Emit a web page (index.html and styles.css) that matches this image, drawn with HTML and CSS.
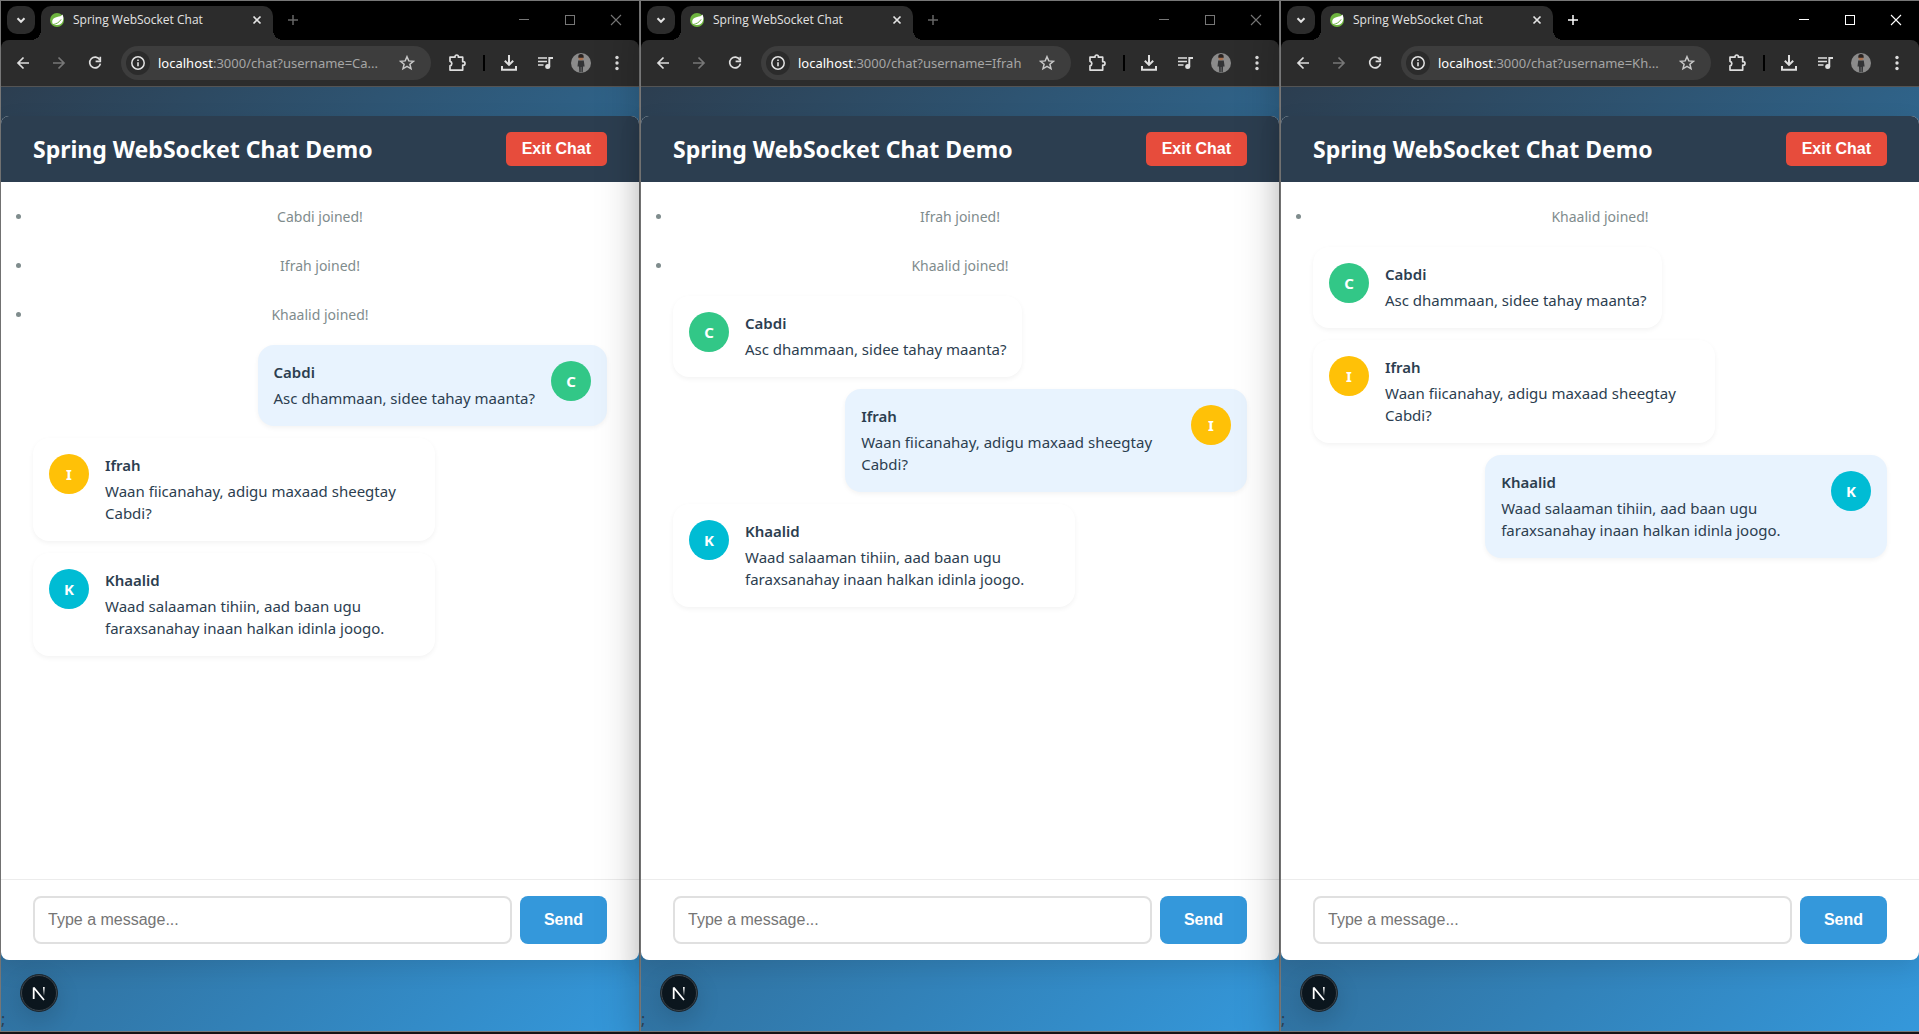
FILE: index.html
```html
<!DOCTYPE html>
<html lang="en">
<head>
<meta charset="utf-8">
<title>Spring WebSocket Chat</title>
<link rel="stylesheet" href="styles.css">
</head>
<body>
<svg class="sprite" aria-hidden="true">
  <symbol id="i-chevron" viewBox="0 0 16 16"><path d="M4.5 6.3 8 9.8l3.500-3.500" fill="none" stroke="currentColor" stroke-width="2"/></symbol>
  <symbol id="i-leaf" viewBox="0 0 16 16"><circle cx="8" cy="8" r="7" fill="#6db33f"/><path d="M13.500 2.500c-1 1.800-3 2-5.500 2.400C4.800 5.500 3 7.500 3.200 10c.1 1 .5 1.900 1.100 2.500 3.200 1.300 9.300 1 10-5.500.2-1.700-.2-3.300-.8-4.500z" fill="#fff"/><path d="M3.700 12.600c3.400-.5 6.500-2 8.400-5.200" fill="none" stroke="#6db33f" stroke-width="1"/></symbol>
  <symbol id="i-x" viewBox="0 0 16 16"><path d="m4.500 4.500 7 7m0-7-7 7" fill="none" stroke="currentColor" stroke-width="1.700"/></symbol>
  <symbol id="i-plus" viewBox="0 0 16 16"><path d="M8 3v10M3 8h10" fill="none" stroke="currentColor" stroke-width="1.500"/></symbol>
  <symbol id="i-min" viewBox="0 0 16 16"><path d="M3 7.500h10" fill="none" stroke="currentColor"/></symbol>
  <symbol id="i-max" viewBox="0 0 16 16"><rect x="3.500" y="3.500" width="9" height="9" fill="none" stroke="currentColor"/></symbol>
  <symbol id="i-close" viewBox="0 0 16 16"><path d="m3 3 10 10m0-10L3 13" fill="none" stroke="currentColor" stroke-width="1.100"/></symbol>
  <symbol id="i-back" viewBox="0 0 16 16"><path d="M14 8H3m5.500-5.500L3 8l5.500 5.500" fill="none" stroke="currentColor" stroke-width="1.700"/></symbol>
  <symbol id="i-forward" viewBox="0 0 16 16"><path d="M2 8h11M7.500 2.500 13 8l-5.500 5.500" fill="none" stroke="currentColor" stroke-width="1.700"/></symbol>
  <symbol id="i-reload" viewBox="0 0 16 16"><path d="M12.800 4.800A5.400 5.400 0 1 0 13.400 8.600" fill="none" stroke="currentColor" stroke-width="1.700"/><path d="M13.300 1.700v4.700H8.600" fill="none" stroke="currentColor" stroke-width="1.700"/></symbol>
  <symbol id="i-info" viewBox="0 0 16 16"><circle cx="8" cy="8" r="6.200" fill="none" stroke="currentColor" stroke-width="1.500"/><path d="M8 7.200v4M8 4.500v1.600" stroke="currentColor" stroke-width="1.600"/></symbol>
  <symbol id="i-star" viewBox="0 0 16 16"><path d="m8 1.700 1.800 4.200 4.600.4-3.500 3 1.100 4.500L8 11.400l-4 2.400 1.100-4.500-3.500-3 4.600-.4z" fill="none" stroke="currentColor" stroke-width="1.500"/></symbol>
  <symbol id="i-puzzle" viewBox="0 0 18 18"><path d="M2 3.200h5v-.5a1.700 1.700 0 0 1 3.400 0v.5h4.300v4.500h.6a1.700 1.700 0 0 1 0 3.400h-.6v5H2v-4.300a2.300 2.300 0 0 0 0-4.500z" fill="none" stroke="currentColor" stroke-width="1.700" stroke-linejoin="round"/></symbol>
  <symbol id="i-download" viewBox="0 0 18 18"><path d="M9 1v9.500M4.800 6.700 9 10.900l4.200-4.200M2 12v3.700h14V12" fill="none" stroke="currentColor" stroke-width="2"/></symbol>
  <symbol id="i-music" viewBox="0 0 18 18"><path d="M2 4h9M2 7.500h9M2 11h5.500" stroke="currentColor" stroke-width="1.700"/><path d="M13.300 12.500V4H17" fill="none" stroke="currentColor" stroke-width="1.900"/><circle cx="11.700" cy="12.600" r="2.500" fill="currentColor"/></symbol>
  <symbol id="i-profile" viewBox="0 0 20 20"><circle cx="10" cy="10" r="10" fill="#8b8b8b"/><path d="M7.200 7.500h5.600l.8 6h-1.500l-.3 5.800H8.300L8 13.500H6.500z" fill="#333436"/><circle cx="10" cy="4.700" r="2.500" fill="#a97250"/><path d="M7.300 3.700a2.700 2.700 0 0 1 5.400 0v1H7.300z" fill="#292423"/><path d="M9.700 14h.8v5h-.8z" fill="#777"/></symbol>
  <symbol id="i-dots" viewBox="0 0 16 16"><circle cx="8" cy="2.500" r="1.700" fill="currentColor"/><circle cx="8" cy="8" r="1.700" fill="currentColor"/><circle cx="8" cy="13.500" r="1.700" fill="currentColor"/></symbol>
  <linearGradient id="n-stem" x1="0" y1="0" x2="0" y2="1"><stop offset="0" stop-color="#fff"/><stop offset="1" stop-color="#fff" stop-opacity="0"/></linearGradient>
  <symbol id="i-next" viewBox="0 0 38 38"><circle cx="19" cy="19" r="18.500" fill="#0b161e" stroke="#1d2830"/><circle cx="19" cy="19" r="17.500" fill="none" stroke="#3d464d"/><path d="M13.700 25V13.500L24 26" fill="none" stroke="#fff" stroke-width="1.800" stroke-linejoin="bevel"/><rect x="23" y="13" width="1.700" height="9" fill="url(#n-stem)"/></symbol>
</svg>
<main class="desktop">

  <section class="window">
    <div class="tabstrip">
      <button class="tab-search" aria-label="Search tabs"><svg><use href="#i-chevron"/></svg></button>
      <div class="tab"><svg><use href="#i-leaf"/></svg><span class="tab-title">Spring WebSocket Chat</span><button class="tab-close" aria-label="Close tab"><svg><use href="#i-x"/></svg></button></div>
      <button class="new-tab" aria-label="New tab"><svg><use href="#i-plus"/></svg></button>
      <div class="controls">
        <button aria-label="Minimize"><svg><use href="#i-min"/></svg></button>
        <button aria-label="Maximize"><svg><use href="#i-max"/></svg></button>
        <button aria-label="Close"><svg><use href="#i-close"/></svg></button>
      </div>
    </div>
    <div class="toolbar">
      <button aria-label="Back"><svg><use href="#i-back"/></svg></button>
      <button class="off" aria-label="Forward"><svg><use href="#i-forward"/></svg></button>
      <button aria-label="Reload"><svg><use href="#i-reload"/></svg></button>
      <div class="address"><span class="site-info"><svg><use href="#i-info"/></svg></span><span class="url"><b>localhost</b>:3000/chat?username=Ca...</span><svg class="star"><use href="#i-star"/></svg></div>
      <button aria-label="Extensions"><svg class="big"><use href="#i-puzzle"/></svg></button>
      <span class="divider"></span>
      <button aria-label="Downloads"><svg class="big"><use href="#i-download"/></svg></button>
      <button aria-label="Media"><svg class="big"><use href="#i-music"/></svg></button>
      <button aria-label="Profile"><svg class="face"><use href="#i-profile"/></svg></button>
      <button aria-label="Menu"><svg><use href="#i-dots"/></svg></button>
    </div>
    <div class="page">
      <div class="chat">
        <header class="chat-header"><h1>Spring WebSocket Chat Demo</h1><button class="exit">Exit Chat</button></header>
        <ul class="messages">
          <li class="event">Cabdi joined!</li>
          <li class="event">Ifrah joined!</li>
          <li class="event">Khaalid joined!</li>
          <li class="message own"><span class="avatar green">C</span><div><strong>Cabdi</strong><p>Asc dhammaan, sidee tahay maanta?</p></div></li>
          <li class="message"><span class="avatar amber">I</span><div><strong>Ifrah</strong><p>Waan fiicanahay, adigu maxaad sheegtay Cabdi?</p></div></li>
          <li class="message"><span class="avatar cyan">K</span><div><strong>Khaalid</strong><p>Waad salaaman tihiin, aad baan ugu faraxsanahay inaan halkan idinla joogo.</p></div></li>
        </ul>
        <form class="composer"><input type="text" aria-label="Message" placeholder="Type a message..."><button type="button">Send</button></form>
      </div>
      <div class="trailing">;</div>
      <button class="dev-badge" aria-label="Developer tools"><svg><use href="#i-next"/></svg></button>
    </div>
  </section>

  <section class="window">
    <div class="tabstrip">
      <button class="tab-search" aria-label="Search tabs"><svg><use href="#i-chevron"/></svg></button>
      <div class="tab"><svg><use href="#i-leaf"/></svg><span class="tab-title">Spring WebSocket Chat</span><button class="tab-close" aria-label="Close tab"><svg><use href="#i-x"/></svg></button></div>
      <button class="new-tab" aria-label="New tab"><svg><use href="#i-plus"/></svg></button>
      <div class="controls">
        <button aria-label="Minimize"><svg><use href="#i-min"/></svg></button>
        <button aria-label="Maximize"><svg><use href="#i-max"/></svg></button>
        <button aria-label="Close"><svg><use href="#i-close"/></svg></button>
      </div>
    </div>
    <div class="toolbar">
      <button aria-label="Back"><svg><use href="#i-back"/></svg></button>
      <button class="off" aria-label="Forward"><svg><use href="#i-forward"/></svg></button>
      <button aria-label="Reload"><svg><use href="#i-reload"/></svg></button>
      <div class="address"><span class="site-info"><svg><use href="#i-info"/></svg></span><span class="url"><b>localhost</b>:3000/chat?username=Ifrah</span><svg class="star"><use href="#i-star"/></svg></div>
      <button aria-label="Extensions"><svg class="big"><use href="#i-puzzle"/></svg></button>
      <span class="divider"></span>
      <button aria-label="Downloads"><svg class="big"><use href="#i-download"/></svg></button>
      <button aria-label="Media"><svg class="big"><use href="#i-music"/></svg></button>
      <button aria-label="Profile"><svg class="face"><use href="#i-profile"/></svg></button>
      <button aria-label="Menu"><svg><use href="#i-dots"/></svg></button>
    </div>
    <div class="page">
      <div class="chat">
        <header class="chat-header"><h1>Spring WebSocket Chat Demo</h1><button class="exit">Exit Chat</button></header>
        <ul class="messages">
          <li class="event">Ifrah joined!</li>
          <li class="event">Khaalid joined!</li>
          <li class="message"><span class="avatar green">C</span><div><strong>Cabdi</strong><p>Asc dhammaan, sidee tahay maanta?</p></div></li>
          <li class="message own"><span class="avatar amber">I</span><div><strong>Ifrah</strong><p>Waan fiicanahay, adigu maxaad sheegtay Cabdi?</p></div></li>
          <li class="message"><span class="avatar cyan">K</span><div><strong>Khaalid</strong><p>Waad salaaman tihiin, aad baan ugu faraxsanahay inaan halkan idinla joogo.</p></div></li>
        </ul>
        <form class="composer"><input type="text" aria-label="Message" placeholder="Type a message..."><button type="button">Send</button></form>
      </div>
      <div class="trailing">;</div>
      <button class="dev-badge" aria-label="Developer tools"><svg><use href="#i-next"/></svg></button>
    </div>
  </section>

  <section class="window active">
    <div class="tabstrip">
      <button class="tab-search" aria-label="Search tabs"><svg><use href="#i-chevron"/></svg></button>
      <div class="tab"><svg><use href="#i-leaf"/></svg><span class="tab-title">Spring WebSocket Chat</span><button class="tab-close" aria-label="Close tab"><svg><use href="#i-x"/></svg></button></div>
      <button class="new-tab" aria-label="New tab"><svg><use href="#i-plus"/></svg></button>
      <div class="controls">
        <button aria-label="Minimize"><svg><use href="#i-min"/></svg></button>
        <button aria-label="Maximize"><svg><use href="#i-max"/></svg></button>
        <button aria-label="Close"><svg><use href="#i-close"/></svg></button>
      </div>
    </div>
    <div class="toolbar">
      <button aria-label="Back"><svg><use href="#i-back"/></svg></button>
      <button class="off" aria-label="Forward"><svg><use href="#i-forward"/></svg></button>
      <button aria-label="Reload"><svg><use href="#i-reload"/></svg></button>
      <div class="address"><span class="site-info"><svg><use href="#i-info"/></svg></span><span class="url"><b>localhost</b>:3000/chat?username=Kh...</span><svg class="star"><use href="#i-star"/></svg></div>
      <button aria-label="Extensions"><svg class="big"><use href="#i-puzzle"/></svg></button>
      <span class="divider"></span>
      <button aria-label="Downloads"><svg class="big"><use href="#i-download"/></svg></button>
      <button aria-label="Media"><svg class="big"><use href="#i-music"/></svg></button>
      <button aria-label="Profile"><svg class="face"><use href="#i-profile"/></svg></button>
      <button aria-label="Menu"><svg><use href="#i-dots"/></svg></button>
    </div>
    <div class="page">
      <div class="chat">
        <header class="chat-header"><h1>Spring WebSocket Chat Demo</h1><button class="exit">Exit Chat</button></header>
        <ul class="messages">
          <li class="event">Khaalid joined!</li>
          <li class="message"><span class="avatar green">C</span><div><strong>Cabdi</strong><p>Asc dhammaan, sidee tahay maanta?</p></div></li>
          <li class="message"><span class="avatar amber">I</span><div><strong>Ifrah</strong><p>Waan fiicanahay, adigu maxaad sheegtay Cabdi?</p></div></li>
          <li class="message own"><span class="avatar cyan">K</span><div><strong>Khaalid</strong><p>Waad salaaman tihiin, aad baan ugu faraxsanahay inaan halkan idinla joogo.</p></div></li>
        </ul>
        <form class="composer"><input type="text" aria-label="Message" placeholder="Type a message..."><button type="button">Send</button></form>
      </div>
      <div class="trailing">;</div>
      <button class="dev-badge" aria-label="Developer tools"><svg><use href="#i-next"/></svg></button>
    </div>
  </section>

</main>
</body>
</html>
```
FILE: styles.css
```css
* { box-sizing: border-box; }
body { margin: 0; background: #1a171b; font-family: "Noto Sans", "Open Sans", sans-serif; color: #2c3e50; overflow: hidden; }
button { border: 0; padding: 0; background: none; color: inherit; font: inherit; cursor: pointer; }
svg { display: block; width: 16px; height: 16px; flex: none; }
.sprite { position: absolute; width: 0; height: 0; }

/* three tiled browser windows */
.desktop { display: grid; grid-template-columns: repeat(3, 1fr); min-height: 100vh; padding-bottom: 2px; margin-right: -1px; }
.window { position: relative; display: flex; flex-direction: column; min-width: 0; border: 1px solid #777; box-shadow: 0 16px 40px rgba(0, 0, 0, .25); background: #000; }

.tabstrip { display: flex; height: 39px; padding: 5px 0 0 6px; color: #e3e3e3; }
.tab-search { display: grid; place-items: center; width: 28px; height: 28px; border-radius: 10px; background: #2c2c2c; }
.tab { position: relative; display: flex; align-items: center; width: 232px; height: 34px; margin-left: 6px; padding: 0 8px 6px 8px; border-radius: 10px 10px 0 0; background: #2c2c2c; }
.tab::before, .tab::after { content: ""; position: absolute; bottom: 0; width: 10px; height: 10px; }
.tab::before { right: 100%; background: radial-gradient(circle at 0 0, transparent 10px, #2c2c2c 10px); }
.tab::after { left: 100%; background: radial-gradient(circle at 100% 0, transparent 10px, #2c2c2c 10px); }
.tab-title { flex: 1; margin-left: 8px; font-family: "Open Sans", "Noto Sans", sans-serif; font-size: 12px; line-height: 16px; white-space: nowrap; }
.new-tab { display: grid; place-items: center; width: 28px; height: 28px; margin-left: 6px; color: #666; }
.controls { display: flex; margin-left: auto; color: #777; }
.controls button { display: grid; place-items: center; width: 46px; height: 28px; }
.active .new-tab, .active .controls { color: #fff; }

.toolbar { display: flex; align-items: center; height: 47px; padding: 0 4px; border-bottom: 1px solid #545454; border-radius: 8px 8px 0 0; background: #2c2c2c; color: #dedede; }
.toolbar button { display: grid; place-items: center; width: 36px; height: 36px; flex: none; }
.toolbar .off { color: #777; }
.toolbar .big { width: 18px; height: 18px; }
.toolbar .face { width: 20px; height: 20px; }
.address { display: flex; align-items: center; flex: 1; min-width: 0; height: 34px; margin: 0 8px; padding: 0 16px 0 5px; border-radius: 17px; background: #3d3d3d; color: #c7c7c7; }
.site-info { display: grid; place-items: center; width: 24px; height: 24px; margin-right: 8px; border-radius: 50%; background: #2b2b2b; color: #e3e3e3; flex: none; }
.url { flex: 1; min-width: 0; overflow: hidden; font-size: 13px; line-height: 20px; white-space: nowrap; color: #a5a5a5; }
.url b { font-weight: 400; color: #fff; }
.divider { width: 2px; height: 16px; margin: 0 6px 0 8px; background: #000; }

.page { position: relative; display: flex; flex-direction: column; flex: 1; padding-top: 29px; background: linear-gradient(135deg, #2c3e50, #3498db); }
.chat { display: flex; flex-direction: column; flex: 1; border-radius: 8px; background: #fff; overflow: hidden; box-shadow: 0 8px 24px rgba(0, 0, 0, .1); }
.chat-header { display: flex; align-items: center; justify-content: space-between; height: 66px; padding: 0 32px; background: #2c3e50; color: #fff; }
h1 { margin: 0; font-size: 23px; line-height: 32px; font-weight: 700; white-space: nowrap; }
.exit { height: 34px; padding: 0 16px; border-radius: 5px; background: #e74c3c; font: 700 16px "Liberation Sans", Arial, sans-serif; }
.messages { display: flex; flex-direction: column; flex: 1; gap: 12px; margin: 0; padding: 16px 32px; }
.event { padding: 8px 0; font-size: 14px; line-height: 21px; text-align: center; color: #7f8c8d; }
.message { display: flex; align-self: flex-start; gap: 16px; max-width: 70%; padding: 16px; border-radius: 16px; font-size: 15px; background: #fff; box-shadow: 0 2px 5px rgba(0, 0, 0, .05); }
.message.own { flex-direction: row-reverse; align-self: flex-end; background: #e8f3fe; }
.message strong { display: block; margin-bottom: 4px; font-weight: 600; line-height: 22px; }
.message p { margin: 0 0 1px; line-height: 22px; }
.avatar { display: grid; place-items: center; width: 40px; height: 40px; flex: none; border-radius: 50%; color: #fff; font-weight: 700; }
.green { background: #32c787; }
.amber { background: #ffc107; }
.cyan { background: #00bcd4; }
.composer { display: flex; gap: 8px; padding: 16px 32px; border-top: 1px solid #ececec; }
.composer input { flex: 1; min-width: 0; height: 48px; padding: 0 13px; border: 2px solid #e0e0e0; border-radius: 8px; background: #fff; font: 16px "Liberation Sans", Arial, sans-serif; }
.composer input::placeholder { color: #757575; }
.composer button { height: 48px; padding: 0 24px; border-radius: 8px; background: #3498db; color: #fff; font: 700 16px "Liberation Sans", Arial, sans-serif; }
.trailing { height: 71px; padding-top: 47px; font-size: 16px; line-height: 24px; overflow: hidden; }
.dev-badge { position: absolute; left: 19px; bottom: 19px; border-radius: 50%; box-shadow: 0 8px 24px rgba(0, 0, 0, .15); }
.dev-badge svg { width: 38px; height: 38px; }
```
